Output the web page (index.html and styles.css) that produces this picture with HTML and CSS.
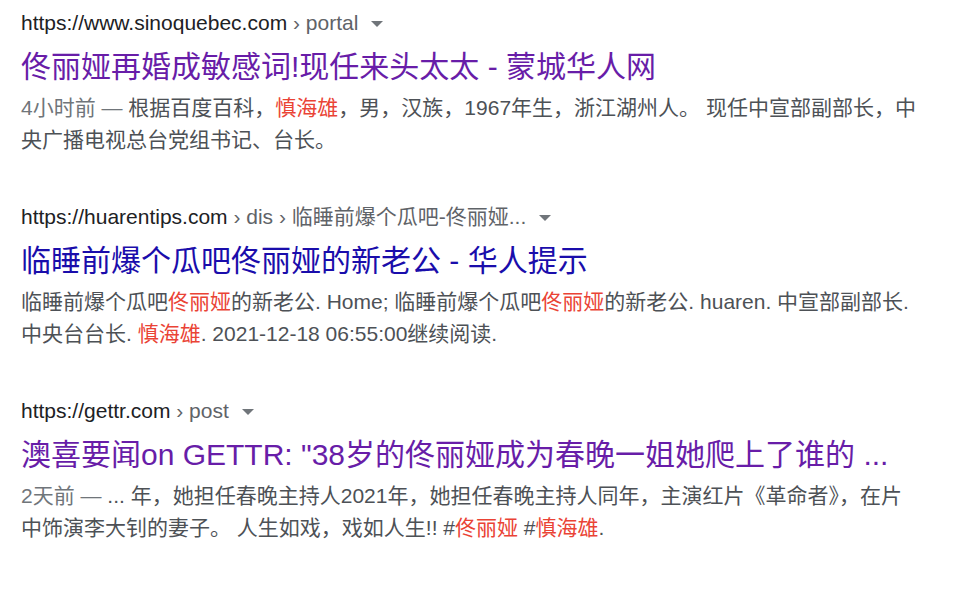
FILE: index.html
```html
<!DOCTYPE html>
<html lang="zh-CN">
<head>
<meta charset="utf-8">
<title>搜索结果</title>
<link rel="stylesheet" href="styles.css">
</head>
<body>
<div class="results">
  <div class="result">
    <div class="url"><span class="host">https://www.sinoquebec.com</span><span class="crumb"> › portal</span><span class="arrow"></span></div>
    <div class="title visited">佟丽娅再婚成敏感词!现任来头太太 - 蒙城华人网</div>
    <div class="snippet"><span class="date">4小时前 — </span>根据百度百科，<em>慎海雄</em>，男，汉族，1967年生，浙江湖州人。 现任中宣部副部长，中央广播电视总台党组书记、台长。</div>
  </div>
  <div class="result">
    <div class="url"><span class="host">https://huarentips.com</span><span class="crumb"> › dis › 临睡前爆个瓜吧-佟丽娅...</span><span class="arrow"></span></div>
    <div class="title">临睡前爆个瓜吧佟丽娅的新老公 - 华人提示</div>
    <div class="snippet">临睡前爆个瓜吧<em>佟丽娅</em>的新老公. Home; 临睡前爆个瓜吧<em>佟丽娅</em>的新老公. huaren. 中宣部副部长. 中央台台长. <em>慎海雄</em>. 2021-12-18 06:55:00继续阅读.</div>
  </div>
  <div class="result">
    <div class="url"><span class="host">https://gettr.com</span><span class="crumb"> › post</span><span class="arrow"></span></div>
    <div class="title visited">澳喜要闻on GETTR: "38岁的佟丽娅成为春晚一姐她爬上了谁的 ...</div>
    <div class="snippet"><span class="date">2天前 — </span>... 年，她担任春晚主持人2021年，她担任春晚主持人同年，主演红片《革命者》，在片中饰演李大钊的妻子。 人生如戏，戏如人生!! #<em>佟丽娅</em> #<em>慎海雄</em>.</div>
  </div>
</div>
</body>
</html>
```
FILE: styles.css
```css
html, body {
  margin: 0;
  padding: 0;
  background: #ffffff;
}
body {
  font-family: "Liberation Sans", Arial, "Noto Sans CJK SC", sans-serif;
  color: #4d5156;
}
.results {
  padding: 8px 0 0 21px;
  width: 900px;
}
.result {
  margin-bottom: 46px;
}
.url {
  font-size: 21px;
  line-height: 30px;
  color: #202124;
  white-space: nowrap;
  display: flex;
  align-items: center;
}
.crumb {
  color: #5f6368;
  white-space: pre;
}
.arrow {
  display: inline-block;
  width: 0;
  height: 0;
  border-left: 6px solid transparent;
  border-right: 6px solid transparent;
  border-top: 6px solid #70757a;
  margin-left: 13px;
  margin-top: 2px;
}
.title {
  font-size: 30px;
  line-height: 40px;
  margin-top: 9px;
  color: #1a0dab;
  white-space: nowrap;
}
.title.visited {
  color: #681da8;
}
.snippet {
  font-size: 21px;
  line-height: 32px;
  margin-top: 5px;
  color: #4d5156;
}
.date {
  color: #70757a;
}
.snippet em {
  font-style: normal;
  color: #ea4335;
}
```
